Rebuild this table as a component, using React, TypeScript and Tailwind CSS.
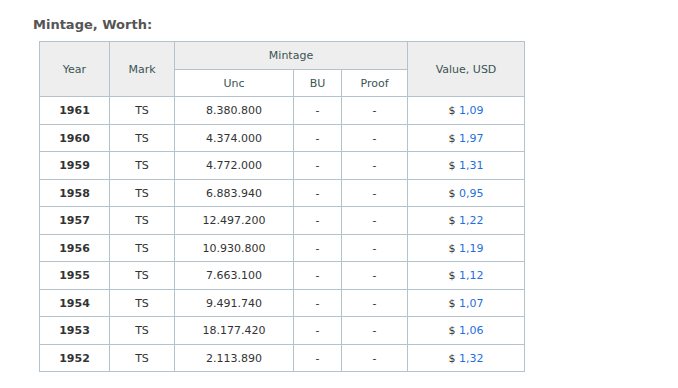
import React from 'react';

const rows = [
  { year: '1961', mark: 'TS', unc: '8.380.800', value: '1,09' },
  { year: '1960', mark: 'TS', unc: '4.374.000', value: '1,97' },
  { year: '1959', mark: 'TS', unc: '4.772.000', value: '1,31' },
  { year: '1958', mark: 'TS', unc: '6.883.940', value: '0,95' },
  { year: '1957', mark: 'TS', unc: '12.497.200', value: '1,22' },
  { year: '1956', mark: 'TS', unc: '10.930.800', value: '1,19' },
  { year: '1955', mark: 'TS', unc: '7.663.100', value: '1,12' },
  { year: '1954', mark: 'TS', unc: '9.491.740', value: '1,07' },
  { year: '1953', mark: 'TS', unc: '18.177.420', value: '1,06' },
  { year: '1952', mark: 'TS', unc: '2.113.890', value: '1,32' },
];

const th = 'border border-[#b3c2cb] bg-[#eeeeee] font-normal text-[#3b5454] text-center p-0 pt-[2px]';
const td = 'border border-[#b3c2cb] text-center p-0 pt-[2px]';

export default function App() {
  return (
    <div className="min-h-[388px] bg-white pt-[16px] pl-[33px] text-[11px] text-[#333333] font-['DejaVu_Sans',Verdana,sans-serif]">
      <h2 className="text-[13px] leading-[18px] font-bold text-[#555555] mb-[7px]">Mintage, Worth:</h2>
      <table className="ml-[6px] w-[486px] table-fixed border-collapse">
        <colgroup>
          <col className="w-[70px]" />
          <col className="w-[65px]" />
          <col className="w-[119px]" />
          <col className="w-[48px]" />
          <col className="w-[66px]" />
          <col className="w-[117px]" />
        </colgroup>
        <thead>
          <tr className="h-[28px]">
            <th rowSpan={2} className={th}>Year</th>
            <th rowSpan={2} className={th}>Mark</th>
            <th colSpan={3} className={th}>Mintage</th>
            <th rowSpan={2} className={th}>Value, USD</th>
          </tr>
          <tr className="h-[27px]">
            <th className={`${th} bg-white`}>Unc</th>
            <th className={`${th} bg-white`}>BU</th>
            <th className={`${th} bg-white`}>Proof</th>
          </tr>
        </thead>
        <tbody>
          {rows.map((r) => (
            <tr key={r.year} className="h-[27.5px]">
              <td className={`${td} font-bold`}>{r.year}</td>
              <td className={td}>{r.mark}</td>
              <td className={td}>{r.unc}</td>
              <td className={td}>-</td>
              <td className={td}>-</td>
              <td className={td}>
                $ <span className="text-[#1f6fe0]">{r.value}</span>
              </td>
            </tr>
          ))}
        </tbody>
      </table>
    </div>
  );
}
